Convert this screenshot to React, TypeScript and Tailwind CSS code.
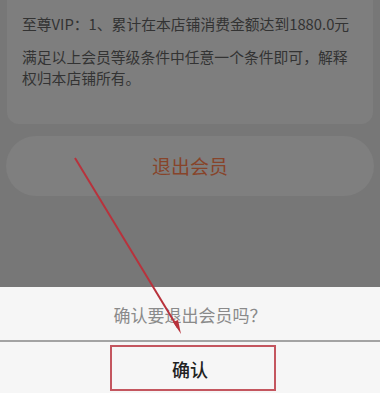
export default function App() {
  return (
    <div className="relative h-[393px] w-[380px] overflow-hidden bg-[#777777] font-['Noto_Sans_CJK_SC',sans-serif]">
      {/* page behind the dimmed overlay */}
      <div className="flex flex-col px-[6px]">
        <div className="mx-[1px] rounded-b-[12px] bg-[#7e7e7e] pb-[36px] pl-[15px] pr-[10px] pt-[13px] text-[14.8px] leading-[21px] text-[#333333]">
          <p>至尊VIP：1、累计在本店铺消费金额达到1880.0元</p>
          <p className="mt-[12px] w-[330px]">满足以上会员等级条件中任意一个条件即可，解释权归本店铺所有。</p>
        </div>
        <button
          type="button"
          className="mt-[12px] flex h-[60px] items-center justify-center rounded-full bg-[#7f7f7f] text-[19px] text-[#87442a]"
        >
          退出会员
        </button>
      </div>

      {/* bottom sheet */}
      <div className="absolute inset-x-0 top-[287px] bottom-0 flex flex-col bg-[#f6f6f6]">
        <div className="flex h-[53px] items-center justify-center pt-[3px] text-[17px] text-[#8a8a8a]">
          确认要退出会员吗？
        </div>
        <div className="h-[2px] bg-[#a3a3a3]" />
        <div className="flex flex-1 items-start justify-center pt-[14px] text-[18px] font-medium text-[#222222]">
          确认
        </div>
      </div>

      {/* annotation: red box */}
      <div className="absolute left-[110px] top-[345px] h-[46px] w-[166px] border-2 border-[#c4565f]" />

      {/* annotation: arrow */}
      <svg className="pointer-events-none absolute inset-0" width="380" height="393" viewBox="0 0 380 393">
        <line x1="75" y1="158" x2="178" y2="328" stroke="#b8323c" strokeWidth="2" />
        <polygon points="181,334 173,322 178,320" fill="#b8323c" />
      </svg>
    </div>
  );
}
